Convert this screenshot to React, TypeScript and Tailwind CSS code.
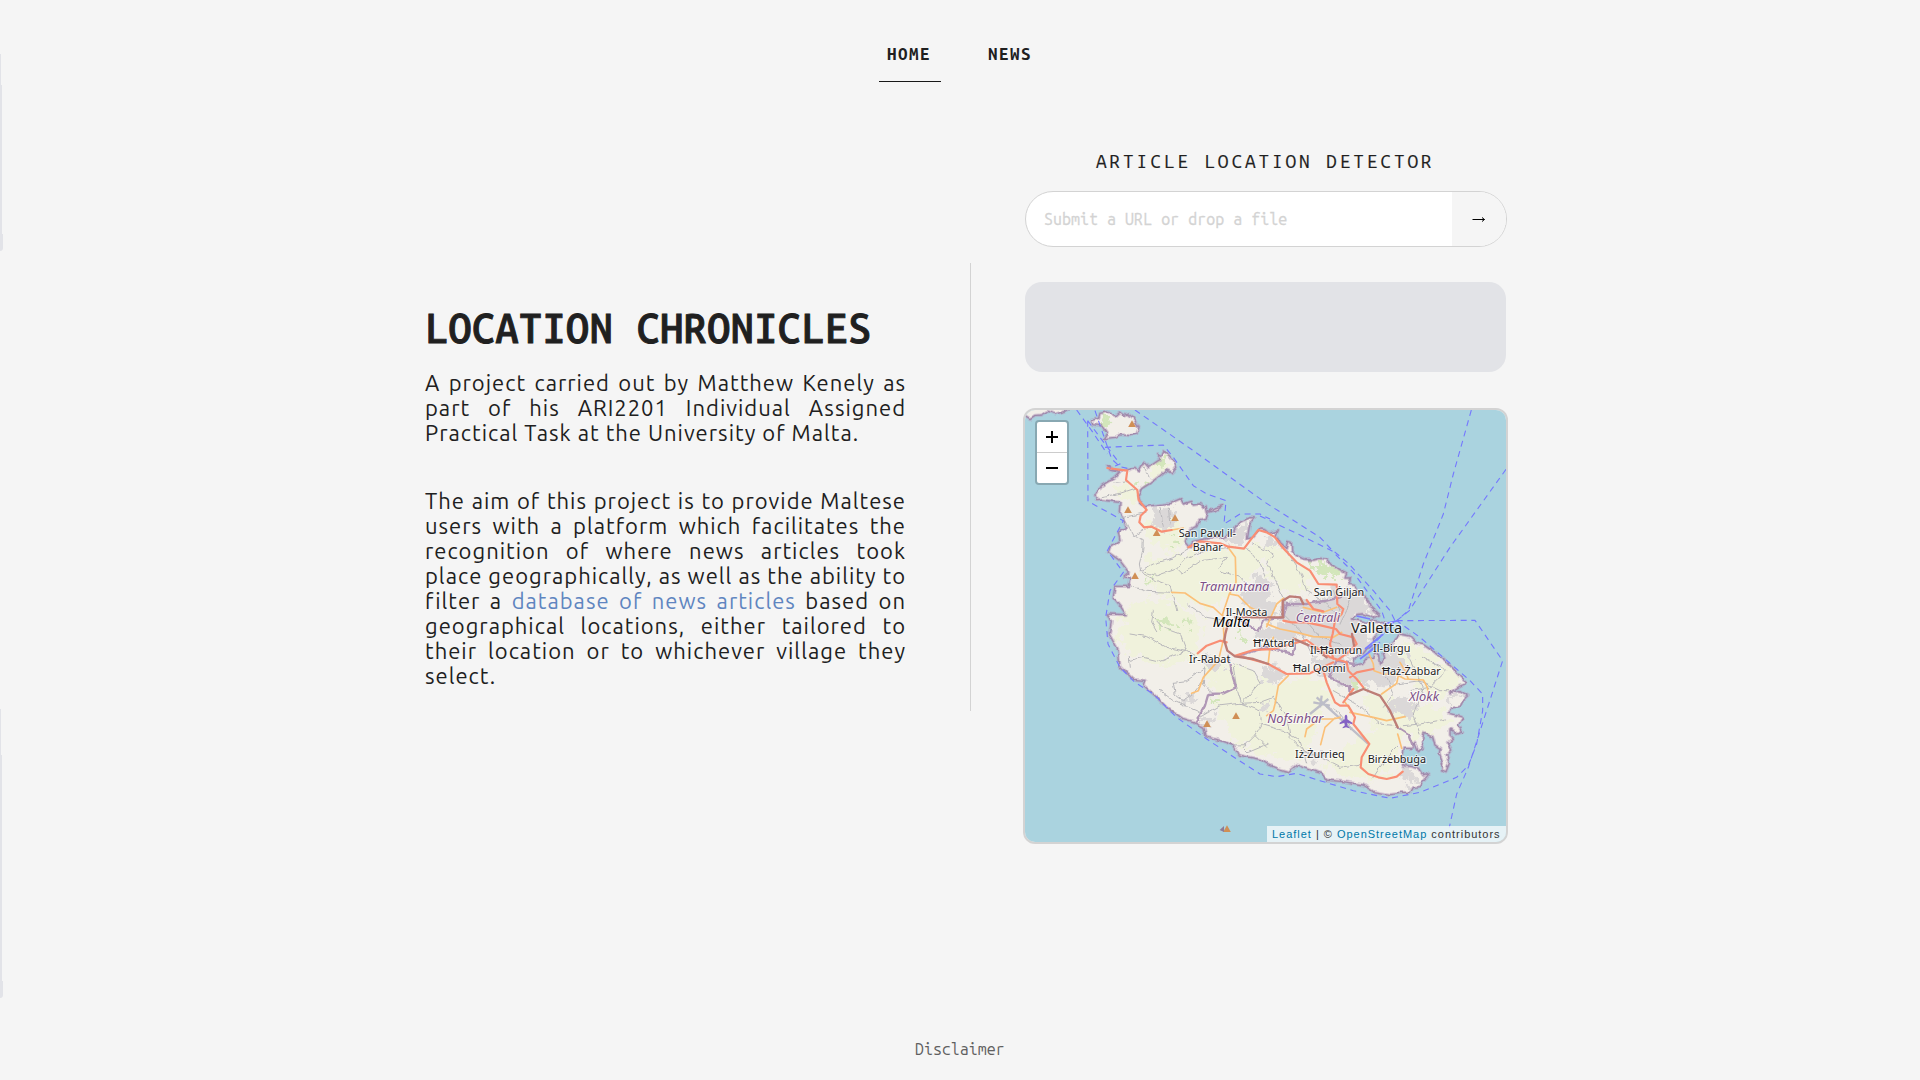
import React from "react";

const MONO = "font-['Ubuntu_Mono','DejaVu_Sans_Mono',monospace]";

const COAST =
  "M262 186L285 199L318 200L345 190L356 202L372 175L386 190L400 180L413 171L421 166L411 152L425 158L433 138L450 158L462 172L470 190L458 206L440 198L420 215L390 238L365 254L355 275L360 295L378 308L415 302L450 298L482 284L490 300L515 292L520 303L540 300L550 312L558 306L562 325L585 312L608 305L592 318L565 325L558 346L538 350L530 368L510 378L500 395L496 412L510 430L520 412L570 402L610 400L640 385L650 365L665 352L690 341L703 342L690 357L685 385L682 405L700 400L720 375L735 378L745 386L775 378L768 395L782 420L798 434L803 412L814 415L815 440L830 455L852 466L880 468L902 463L920 466L933 482L962 500L980 508L975 522L992 522L988 542L1005 545L1012 560L1045 588L1050 608L1078 633L1060 642L1030 630L1010 632L995 645L1040 655L1060 650L1102 655L1095 666L1070 690L1060 705L1065 722L1040 735L1030 748L1005 762L1000 785L1030 778L1045 760L1058 765L1062 745L1078 752L1082 780L1094 765L1090 745L1110 730L1125 705L1140 690L1170 696L1190 718L1210 722L1240 743L1280 773L1300 795L1320 818L1340 838L1320 846L1290 866L1320 860L1345 876L1330 890L1320 908L1295 912L1288 928L1328 940L1315 966L1328 985L1312 990L1290 975L1290 993L1300 1003L1285 1018L1295 1038L1280 1055L1288 1078L1278 1103L1265 1098L1268 1078L1258 1050L1260 1033L1245 1023L1238 998L1212 988L1205 1013L1212 1033L1195 1043L1185 1018L1175 1033L1150 1033L1145 1058L1152 1085L1175 1088L1195 1093L1210 1115L1230 1106L1210 1130L1198 1148L1180 1150L1170 1168L1140 1168L1110 1172L1060 1163L1030 1143L970 1133L920 1128L905 1108L870 1098L830 1083L805 1103L770 1093L742 1080L720 1066L655 1053L640 1023L600 1010L558 998L552 970L520 953L488 943L440 910L410 880L370 843L375 829L340 826L300 788L295 738L268 688L274 655L262 630L318 632L300 605L280 580L285 547L325 547L330 522L310 518L326 505L300 470L265 445L270 430L300 410L295 385L320 370L310 345L298 325L300 295L250 288L230 290L225 275L245 245L285 220L298 205L270 198Z";
const COMINO =
  "M215 50L236 42L240 28L262 24L285 35L298 24L312 34L325 30L340 42L357 70L350 90L330 95L300 92L285 100L250 104L262 85L250 68L238 64L218 62Z";
const GOZO = "M10 10L150 10L135 22L105 30L85 22L65 33L45 34L30 44L10 32Z";

const GREENS = [
  "M240 40L258 36L272 55L268 72L250 62Z",
  "M405 655L420 640L440 655L470 655L460 672L430 668L415 675Z",
  "M480 650L510 648L515 662L490 668Z",
  "M862 480L900 468L935 486L965 506L955 520L915 515L885 500Z",
  "M645 680L665 690L680 708L655 702L638 692Z",
  "M360 250L400 225L408 228L368 258Z",
  "M445 415L480 402L475 415L450 422Z",
  "M1003 834L1015 824L1022 842L1010 858L1002 848Z",
  "M410 165L440 160L445 180L420 195Z",
  "M560 890L585 885L595 896L570 905Z",
  "M375 524L396 518L400 528L380 534Z",
];
const URBAN = [
  "M395 308L455 306L462 350L430 380L395 355L405 335Z",
  "M610 402L648 386L668 354L692 346L682 380L672 410L640 424L615 420Z",
  "M734 395L765 390L768 420L745 440L732 425Z",
  "M700 520L735 515L752 540L745 580L765 590L760 640L720 640L680 625L665 590L650 570L690 555Z",
  "M800 600L850 575L900 590L950 545L1000 560L1030 590L1065 630L1010 632L990 650L1030 670L1055 700L1020 740L960 760L900 740L860 700L800 690L780 650Z",
  "M730 800L780 790L800 815L780 840L740 838L722 820Z",
  "M870 770L940 755L1000 780L1020 830L1000 860L950 830L900 800Z",
  "M1020 700L1100 735L1170 760L1160 800L1130 840L1070 850L1020 830L1000 800Z",
  "M550 770L600 755L612 775L590 800L560 796Z",
  "M1100 900L1150 880L1190 895L1180 930L1130 935Z",
  "M545 940L585 938L580 962L560 965Z",
  "M850 1040L900 1035L915 1060L870 1070Z",
  "M700 690L760 660L800 665L830 700L790 720L720 710Z",
  "M1145 1100L1175 1098L1200 1125L1175 1150L1145 1125Z",
  "M1285 868L1325 868L1330 880L1300 895Z",
  "M490 875L520 870L515 888L490 895Z",
  "M720 890L745 888L750 915L730 925Z",
];
const FIELDS = [
  "M370 365L470 340L500 400L470 440L400 430Z",
  "M380 460L520 450L640 430L720 420L735 450L700 510L640 560L600 600L500 600L420 570L370 510Z",
  "M330 600L420 580L500 620L560 660L520 760L400 790L320 740L290 680Z",
  "M560 800L660 780L760 850L860 820L940 860L900 950L860 1040L800 1070L700 1040L640 1000L600 940Z",
  "M960 1040L1060 970L1140 960L1140 1070L1080 1130L990 1110L900 1090Z",
  "M1140 700L1200 730L1290 800L1320 835L1250 890L1200 860L1170 800L1140 750Z",
  "M1020 860L1200 900L1290 930L1300 960L1180 1000L1060 960Z",
  "M700 420L790 440L860 490L880 540L800 580L750 520Z",
  "M280 250L340 240L360 290L310 290Z",
  "M380 180L440 170L455 195L400 230Z",
];
const MINOR_ROADS = [
  "M245 278L300 268L355 250", "M285 235L325 230", "M372 188L390 225",
  "M310 340L350 332L378 325", "M315 345L340 395L385 370", "M338 395L370 410L368 440L358 480L362 500L410 515L470 495L500 460L560 440L622 430",
  "M360 500L400 480L460 462L500 440L505 430", "M362 505L410 530L450 545L455 565", "M330 545L380 562L455 565L470 620",
  "M470 495L485 510L540 470L620 460", "M680 430L720 480L740 530", "M622 460L600 490", "M700 420L760 450L740 475L780 560L800 600",
  "M330 690L380 698L440 730L500 742L530 760", "M325 770L370 760L420 772L460 755L500 742L480 690L430 672L400 640",
  "M328 790L325 760", "M418 856L470 895L540 925", "M460 835L500 830L555 792", "M460 835L465 870L490 890L520 868L550 830",
  "M555 792L550 840L575 865", "M530 945L600 905L660 898L720 920L725 960L705 995L670 1030L685 1045L745 1020",
  "M650 850L665 898L720 835L700 800L640 780", "M665 898L720 895L760 880", "M650 850L640 790", "M705 995L740 1030",
  "M640 1023L680 1022", "M760 880L800 940L810 1000L850 1040L900 1060L960 1090L1020 1080",
  "M720 960L790 980L840 1010L860 1080", "M910 900L960 930L1000 980", "M940 860L1010 900L1080 960L1130 965",
  "M1100 820L1120 870L1090 910", "M1170 770L1210 850L1180 930L1200 990", "M1130 840L1200 830L1260 860L1290 860",
  "M1150 965L1200 960L1280 945", "M1140 1020L1100 1060L1060 1120", "M1210 760L1280 800L1230 850L1170 860",
  "M600 500L660 520L700 560", "M500 600L560 640L620 650", "M800 440L840 500L860 560", "M850 640L900 700L960 720",
  "M860 560L920 600L960 640", "M940 560L960 620", "M1000 560L980 620L960 660", "M780 620L840 680L880 760",
  "M420 310L430 370", "M445 312L450 360", "M400 620L395 654L410 680",
];
const YELLOW_ROADS = [
  "M455 565L495 567L540 598L580 610L608 636", "M624 430L646 460L648 535L628 570", "M628 570L655 575L690 610L720 625", "M628 570L608 630L612 700L595 770L550 820L535 860L515 868",
  "M455 378L490 372", "M740 668L770 600L790 583", "M740 660L780 675L830 685L880 698L940 700L965 685", "M850 610L910 625L950 610",
  "M805 815L775 845L765 900L760 920L740 935", "M760 700L750 730L745 775", "M855 998L860 975L900 945L940 945L960 940", "M902 1022L915 970L945 942",
  "M990 925L1060 940L1100 950L1155 938", "M1133 990L1136 1000L1145 1033", "M1045 745L1060 780L1062 800L1090 810L1130 812L1155 825L1210 828L1222 850L1225 870", "M1085 870L1130 838L1135 815", "M1140 775L1155 800L1165 825", "M975 895L1000 930",
];
const RED_ROADS = [
  "M262 192L322 200L318 228L352 258L356 288L380 318L362 335L358 355L372 370L395 368L425 383L455 378",
  "M505 430L540 412L600 418L625 428L672 434L690 410L715 378L740 385L765 400L780 420L792 435L830 475L870 500L895 540L950 542",
  "M950 542L952 600L970 615L965 630L945 650L938 690L930 720L940 765", "M790 650L815 655L860 655L905 665L948 675L960 690L1000 700", "M533 748L560 725L600 710L620 715",
  "M645 755L700 738L760 735L860 708L930 760", "M860 588L880 615L910 622",
  "M655 755L745 780L800 810L870 808L940 775", "M910 800L920 835L930 860L945 895L960 905L985 905L1005 940L1000 960L1048 1020L1025 1060L1022 1090L1045 1110L1075 1120L1100 1125L1130 1118L1148 1103",
  "M930 760L980 775L985 800L1010 825L1030 850", "M1000 855L970 895", "M990 820L1010 805L1060 795", "M1000 700L1010 720L985 745L950 770",
];
const BROWN_ROADS = [
  "M645 640L790 640M788 640L788 590L810 577L840 580L850 600", "M625 655L616 690L613 710L622 740L645 757L700 765L745 780", "M990 872L1030 855L1080 875L1110 920L1133 970", "M820 704L880 730L920 760", "M996 690L1002 725",
];
const BORDERS = [
  "M528 955L555 905L565 870L610 868L648 850L630 790L625 755", "M655 755L740 730L820 750L830 715", "M665 650L715 680L730 650L790 640L790 590",
  "M790 640L800 600L860 600L920 590L960 580", "M930 820L950 770L1000 780M930 820L990 850L992 870", "M1133 970L1165 990L1180 1030",
];
const FERRIES = [
  "M345 18L520 140L735 295L900 400L930 432L985 478L1060 560L1110 620L1125 650", "M720 336L850 398L935 440L1000 505L1040 560L1085 620L1095 650",
  "M203 50L204 292L310 350L262 440L310 505L270 560L257 640L264 720L300 790L345 835L400 870L470 940L560 1005L650 1065L720 1110L770 1118L830 1108L900 1130L1000 1160L1110 1183L1200 1165L1310 1120L1345 1085L1370 1020L1388 920L1388 870L1350 830L1200 700L1130 650",
  "M255 130L430 123L460 160L520 245L560 270L618 290L612 360L660 330L720 330L750 345", "M225 20L275 165L300 188L330 195", "M170 18L215 80L262 150", "M203 50L240 100L300 180L270 192",
  "M1354 18L1300 210L1270 330L1210 480L1165 620L1130 650", "M1458 196L1290 430L1168 620L1130 650",
  "M1130 650L1365 649L1448 770L1395 935L1345 1090L1310 1170L1288 1270",
  "M1125 650L1080 700L1040 740",
];
const PEAKS = [[336, 60], [324, 318], [465, 342], [410, 387], [345, 516], [648, 936], [561, 960], [621, 1275]];

type Label = [string, number, number, number, "town" | "region" | "country" | "capital"];
const LABELS: Label[] = [
  ["San Pawl il-", 476, 398, 172, "town"],
  ["Baħar", 518, 441, 90, "town"],
  ["Tramuntana", 538, 561, 210, "region"],
  ["San Ġiljan", 881, 575, 152, "town"],
  ["Il-Mosta", 617, 635, 125, "town"],
  ["Malta", 578, 670, 112, "country"],
  ["Ċentrali", 827, 654, 133, "region"],
  ["Valletta", 993, 688, 154, "capital"],
  ["Ħ'Attard", 700, 729, 123, "town"],
  ["Il-Ħamrun", 870, 749, 157, "town"],
  ["Il-Birgu", 1059, 743, 112, "town"],
  ["Ħal Qormi", 819, 803, 158, "town"],
  ["Ħaż-Żabbar", 1086, 814, 176, "town"],
  ["Ir-Rabat", 507, 777, 124, "town"],
  ["Xlokk", 1167, 890, 90, "region"],
  ["Nofsinhar", 742, 956, 168, "region"],
  ["Iż-Żurrieq", 825, 1062, 149, "town"],
  ["Birżebbuġa", 1043, 1077, 175, "town"],
];
const LABEL_STYLE = {
  town: "fill-[#222] text-[33px]",
  region: "fill-[#7d4f86] text-[40px] italic",
  country: "fill-black text-[43px] italic",
  capital: "fill-[#222] text-[41px]",
};

function Lines({ d, color, width, dash }: { d: string[]; color: string; width: number; dash?: string }) {
  return <path d={d.join("")} fill="none" stroke={color} strokeWidth={width} strokeDasharray={dash} strokeLinejoin="round" strokeLinecap={dash ? "butt" : "round"} />;
}

function MaltaMap() {
  return (
    <svg viewBox="15 18 1443 1296" preserveAspectRatio="none" className="block h-full w-full">
      <defs>
        <filter id="jag" x="-5%" y="-5%" width="110%" height="110%">
          <feTurbulence type="fractalNoise" baseFrequency="0.045" numOctaves="2" seed="4" />
          <feDisplacementMap in="SourceGraphic" scale="14" xChannelSelector="R" yChannelSelector="G" />
        </filter>
        <filter id="patchy" x="-5%" y="-5%" width="110%" height="110%">
          <feTurbulence type="fractalNoise" baseFrequency="0.04" numOctaves="3" seed="9" />
          <feDisplacementMap in="SourceGraphic" scale="70" xChannelSelector="R" yChannelSelector="G" />
        </filter>
        <clipPath id="land"><path d={COAST} /><path d={COMINO} /></clipPath>
      </defs>
      <rect x="0" y="0" width="1480" height="1340" fill="#aad3df" />
      <g filter="url(#jag)">
        <g fill="#f2efe9">
          <path d={COAST} /><path d={COMINO} /><path d={GOZO} />
        </g>
        <g clipPath="url(#land)">
          <g filter="url(#patchy)">
            <path d={FIELDS.join("")} fill="#f0f2dc" />
            <path d={URBAN.join("")} fill="#dbd8d8" />
            <path d={GREENS.join("")} fill="#d3e6bb" />
          </g>
        </g>
        <g fill="none" strokeLinejoin="round">
          <path d={COAST + COMINO + GOZO} stroke="#b89fc0" strokeWidth="10" opacity="0.5" />
          <path d={COAST + COMINO + GOZO} stroke="#95789f" strokeWidth="4" opacity="0.75" />
        </g>
        <Lines d={MINOR_ROADS} color="#b9b8bb" width={3} />
        <Lines d={BORDERS} color="#b097b6" width={7} />
      </g>
      <path d="M870 930L925 885M890 880L1045 1020M880 895L930 905M905 875L900 910" stroke="#bdbdc8" strokeWidth="7" fill="none" />
      <Lines d={YELLOW_ROADS} color="#fbc078" width={5} />
      <Lines d={RED_ROADS} color="#f98e74" width={6.5} />
      <Lines d={BROWN_ROADS} color="#bd7d76" width={7} />
      <Lines d={FERRIES} color="#7477ff" width={3.3} dash="18 14" />
      <path d="M1010 636L1050 645M1035 735L1090 690M1045 745L1080 715M1020 765L1060 735M1090 660L1135 650" stroke="#7a7dff" strokeWidth="5" />
      <g fill="#d08f55">
        {PEAKS.map(([x, y]) => <path key={x} d={`M${x} ${y - 11}l11.500 20h-23z`} />)}
      </g>
      <path d="M599 1278L612 1266L612 1284Z" fill="#8d7a96" />
      <path transform="translate(978 951)" d="M0-19c3 0 4 4 4 9v5l15 10v5l-15-5v9l6 5v3l-10-3-10 3v-3l6-5v-9l-15 5v-5l15-10v-5c0-5 1-9 4-9z" fill="#8461c4" />
      <g className="font-['Noto_Sans',sans-serif]" stroke="#fff" strokeOpacity="0.7" strokeWidth="6" strokeLinejoin="round" style={{ paintOrder: "stroke" }}>
        {LABELS.map(([t, x, y, w, kind]) => (
          <text key={t} x={x} y={y} textLength={w} lengthAdjust="spacingAndGlyphs" className={LABEL_STYLE[kind]}>{t}</text>
        ))}
      </g>
    </svg>
  );
}

const INTRO = ["A project carried out by Matthew Kenely as", "part of his ARI2201 Individual Assigned"];
const line = "-mr-px [text-align-last:justify] whitespace-nowrap";

export default function App() {
  return (
    <div className="relative flex h-[1080px] w-[1920px] flex-col overflow-hidden bg-[#f5f5f5] text-[#202020]">
      <div className="absolute left-0 top-[54px] h-[32px] w-px bg-[#e2e3e8]" />
      <div className="absolute left-0 top-[85px] h-[150px] w-[2px] bg-[#e2e3e8]" />
      <div className="absolute left-0 top-[234px] h-[17px] w-[3px] rounded-br-[3px] bg-[#e2e3e8]" />
      <div className="absolute left-0 top-[709px] h-[47px] w-px bg-[#e2e3e8]" />
      <div className="absolute left-0 top-[755px] h-[227px] w-[2px] bg-[#e2e3e8]" />
      <div className="absolute left-0 top-[981px] h-[17px] w-[3px] rounded-br-[3px] bg-[#e2e3e8]" />

      <nav className={`${MONO} flex h-[82px] shrink-0 items-stretch pl-[879px] text-[17px] font-semibold leading-[20px] tracking-[1.500px]`}>
        <a className="w-[62px] border-b border-[#181818] pl-[8px] pt-[44px]">HOME</a>
        <a className="ml-[38px] pl-[9px] pt-[44px]">NEWS</a>
      </nav>

      <main className="flex h-[762px] shrink-0 pl-[425px]">
        <section className="w-[480px] pt-[219px]">
          <h1 className={`${MONO} h-[55px] whitespace-nowrap text-[41px] font-medium leading-[54px] tracking-[0.560px] [-webkit-text-stroke:0.900px_#202020]`}>LOCATION CHRONICLES</h1>
          <div className="pt-[14px] font-['Ubuntu','Noto_Sans',sans-serif] text-[22px] leading-[25px] tracking-[1px]">
            {INTRO.map((t) => <p key={t} className={line}>{t}</p>)}
            <p className="whitespace-nowrap">Practical Task at the University of Malta.</p>
            <div className="h-[43px]" />
            <p className={line}>The aim of this project is to provide Maltese</p>
            <p className={line}>users with a platform which facilitates the</p>
            <p className={line}>recognition of where news articles took</p>
            <p className={line}>place geographically, as well as the ability to</p>
            <p className={line}>filter a <a className="text-[#5f85c0]">database of news articles</a> based on</p>
            <p className={line}>geographical locations, either tailored to</p>
            <p className={line}>their location or to whichever village they</p>
            <p>select.</p>
          </div>
        </section>

        <div className="ml-[65px] mt-[181px] h-[448px] w-px bg-[#d3d3d3]" />

        <section className="ml-[52px] w-[485px]">
          <h2 className={`${MONO} whitespace-nowrap pl-[73px] pt-[66px] text-[19px] leading-[26px] tracking-[2.900px] [-webkit-text-stroke:0.200px_#202020]`}>ARTICLE LOCATION DETECTOR</h2>
          <div className="ml-[2px] mt-[17px] flex h-[56px] w-[482px] overflow-hidden rounded-full border border-[#d3d3d3] bg-white">
            <div className={`${MONO} flex-1 whitespace-pre pl-[18px] text-[16px] leading-[55px] tracking-[0.050px] text-[#d3d3d3] [-webkit-text-stroke:0.300px_#d3d3d3]`}>Submit a URL or drop a file</div>
            <div className="flex w-[54px] items-center justify-center bg-[#f5f5f5]">
              <svg width="14" height="8" viewBox="0 0 14 8"><path d="M0.500 4.500H12.500M10 2.500L12.500 4.500L10 6.500" fill="none" stroke="#000" strokeWidth="1" /></svg>
            </div>
          </div>
          <div className="ml-[2px] mt-[35px] h-[90px] w-[481px] rounded-[17px] bg-[#e2e3e7]" />
          <div className="relative mt-[36px] h-[436px] w-[485px] overflow-hidden rounded-[12px] border-2 border-[#d3d3d3]">
            <MaltaMap />
            <div className="absolute left-[10px] top-[10px] flex h-[65px] w-[34px] flex-col rounded-[4px] border-2 border-black/20 bg-white bg-clip-padding">
              <div className="flex flex-1 items-center justify-center border-b border-[#ccc]">
                <svg width="12" height="12" viewBox="0 0 12 12"><path d="M0 6H12M6 0V12" stroke="#000" strokeWidth="2" /></svg>
              </div>
              <div className="flex flex-1 items-center justify-center">
                <svg width="12" height="12" viewBox="0 0 12 12"><path d="M0 6H12" stroke="#000" strokeWidth="2" /></svg>
              </div>
            </div>
            <div className="absolute bottom-0 right-0 h-[16px] w-[239px] whitespace-nowrap bg-white/70 pl-[5px] font-['Liberation_Sans',Arial,sans-serif] text-[11px] leading-[16px] tracking-[0.980px] text-[#333]">
              <a className="text-[#0078a8]">Leaflet</a> | © <a className="text-[#0078a8]">OpenStreetMap</a> contributors
            </div>
          </div>
        </section>
      </main>

      <footer className={`${MONO} mt-auto pb-[19px] pl-[915px] text-[16px] leading-[24px] text-[#606060]`}>Disclaimer</footer>
    </div>
  );
}
